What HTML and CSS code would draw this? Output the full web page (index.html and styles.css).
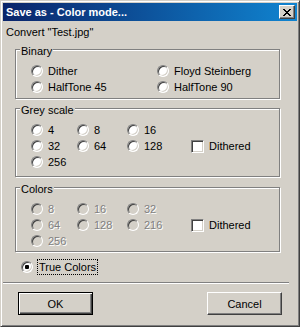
FILE: index.html
```html
<!DOCTYPE html>
<html lang="en">
<head>
    <meta charset="UTF-8">
    <title>Save as - Color mode...</title>
    <link rel="stylesheet" href="styles.css">
</head>
<body>

    <div class="window">
        <div class="titlebar">
            <span class="title">Save as - Color mode...</span>
            <button class="close">
                <svg width="8" height="7" viewBox="0 0 8 7" shape-rendering="crispEdges">
                    <path d="M0 0h2v1H0z M6 0h2v1H6z M1 1h2v1H1z M5 1h2v1H5z M2 2h4v1H2z M3 3h2v1H3z M2 4h4v1H2z M1 5h2v1H1z M5 5h2v1H5z M0 6h2v1H0z M6 6h2v1H6z" fill="#000"/>
                </svg>
            </button>
        </div>

        <div class="client">
            <p class="intro">Convert "Test.jpg"</p>

            <div class="group group-binary">
                <span class="group-label">Binary</span>
                <div class="grid binary-grid">
                    <label class="opt"><span class="radio"></span>Dither</label>
                    <label class="opt"><span class="radio"></span>Floyd Steinberg</label>
                    <label class="opt"><span class="radio"></span>HalfTone 45</label>
                    <label class="opt"><span class="radio"></span>HalfTone 90</label>
                </div>
            </div>

            <div class="group group-grey">
                <span class="group-label">Grey scale</span>
                <div class="grid scale-grid">
                    <label class="opt"><span class="radio"></span>4</label>
                    <label class="opt"><span class="radio"></span>8</label>
                    <label class="opt"><span class="radio"></span>16</label>
                    <span></span>
                    <label class="opt"><span class="radio"></span>32</label>
                    <label class="opt"><span class="radio"></span>64</label>
                    <label class="opt"><span class="radio"></span>128</label>
                    <label class="opt"><span class="check"></span>Dithered</label>
                    <label class="opt"><span class="radio"></span>256</label>
                </div>
            </div>

            <div class="group group-colors">
                <span class="group-label">Colors</span>
                <div class="grid scale-grid">
                    <label class="opt disabled"><span class="radio"></span>8</label>
                    <label class="opt disabled"><span class="radio"></span>16</label>
                    <label class="opt disabled"><span class="radio"></span>32</label>
                    <span></span>
                    <label class="opt disabled"><span class="radio"></span>64</label>
                    <label class="opt disabled"><span class="radio"></span>128</label>
                    <label class="opt disabled"><span class="radio"></span>216</label>
                    <label class="opt"><span class="check"></span>Dithered</label>
                    <label class="opt disabled"><span class="radio"></span>256</label>
                </div>
            </div>

            <label class="true-colors"><span class="radio checked"></span><span class="focus">True Colors</span></label>

            <div class="separator"></div>

            <div class="buttons">
                <button class="btn btn-default">OK</button>
                <button class="btn">Cancel</button>
            </div>
        </div>
    </div>

</body>
</html>
```

FILE: styles.css
```css
body {
    margin: 0;
    font-family: "Liberation Sans", Arial, sans-serif;
    font-size: 11px;
    color: #000;
    background-color: #d4d0c8;
}
.window {
    width: 300px;
    height: 327px;
    box-sizing: border-box;
    border: 1px solid;
    border-color: #d4d0c8 #404040 #404040 #d4d0c8;
    padding: 2px;
    background-color: #d4d0c8;
    box-shadow: inset 1px 1px #fff, inset -1px -1px #808080;
}
.titlebar {
    height: 18px;
    display: flex;
    align-items: center;
    justify-content: space-between;
    padding: 0 2px 0 3px;
    background: linear-gradient(to right, #0a246a, #1084d0);
    color: #fff;
    font-weight: bold;
    line-height: 18px;
}
.close {
    width: 16px;
    height: 14px;
    box-sizing: border-box;
    padding: 0;
    border: 1px solid;
    border-color: #fff #404040 #404040 #fff;
    box-shadow: inset -1px -1px #808080;
    background-color: #d4d0c8;
    display: flex;
    align-items: center;
    justify-content: center;
}
.client {
    padding-top: 5px;
}
.intro {
    margin: 0 0 0 3px;
    line-height: 13px;
}
.group {
    position: relative;
    width: 265px;
    box-sizing: border-box;
    margin: 10px 0 0 12px;
    padding: 15px 0 5px 15px;
    border: 1px solid #808080;
    box-shadow: inset 1px 1px #fff, 1px 1px #fff;
}
.group-grey {
    margin-top: 9px;
    padding-bottom: 8px;
}
.group-colors {
    margin-top: 10px;
    padding-bottom: 4px;
}
.group-label {
    position: absolute;
    top: -5px;
    left: 4px;
    padding: 0 1px;
    line-height: 13px;
    background-color: #d4d0c8;
}
.grid {
    display: grid;
    row-gap: 4px;
}
.binary-grid {
    grid-template-columns: 126px auto;
}
.scale-grid {
    grid-template-columns: 46px 50px 64px auto;
}
.opt {
    display: flex;
    align-items: center;
    gap: 5px;
    height: 12px;
    line-height: 12px;
    white-space: nowrap;
}
.radio {
    position: relative;
    flex: none;
    width: 12px;
    height: 12px;
    box-sizing: border-box;
    border-radius: 50%;
    border: 1px solid;
    border-color: #808080 #fff #fff #808080;
    background-color: #fff;
    box-shadow: inset 1px 1px #404040, inset -1px -1px #d4d0c8;
}
.radio.checked::after {
    content: "";
    position: absolute;
    left: 3px;
    top: 3px;
    width: 4px;
    height: 4px;
    border-radius: 1px;
    background-color: #000;
}
.check {
    flex: none;
    align-self: flex-start;
    width: 13px;
    height: 13px;
    box-sizing: border-box;
    border: 1px solid;
    border-color: #808080 #fff #fff #808080;
    background-color: #fff;
    box-shadow: inset 1px 1px #404040, inset -1px -1px #d4d0c8;
}
.disabled {
    color: #808080;
    text-shadow: 1px 1px #fff;
}
.disabled .radio {
    background-color: #d4d0c8;
}
.true-colors {
    display: flex;
    align-items: center;
    gap: 4px;
    height: 16px;
    margin: 7px 0 0 18px;
}
.focus {
    border: 1px dotted #000;
    padding: 0 1px;
    line-height: 14px;
}
.separator {
    margin: 7px 8px 0 0;
    border-top: 1px solid #808080;
    border-bottom: 1px solid #fff;
}
.buttons {
    display: flex;
    justify-content: space-between;
    margin-top: 8px;
    padding: 0 15px;
}
.btn {
    width: 75px;
    height: 23px;
    box-sizing: border-box;
    padding: 0;
    font: inherit;
    color: #000;
    background-color: #d4d0c8;
    border: 1px solid;
    border-color: #fff #404040 #404040 #fff;
    box-shadow: inset -1px -1px #808080;
}
.btn-default {
    border-color: #000;
    box-shadow: inset 1px 1px #fff, inset -1px -1px #404040, inset -2px -2px #808080;
}
```
